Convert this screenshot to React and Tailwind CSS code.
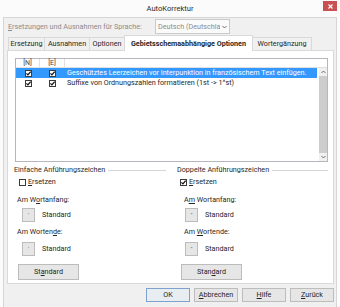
import React from 'react';

const Check = ({ checked }) => (
  <span className="inline-flex w-[7px] h-[7px] shrink-0 items-center justify-center border border-[#3a3a3a] bg-white">
    {checked && (
      <svg width="5" height="5" viewBox="0 0 5 5">
        <path d="M0.4 2.4 L1.9 3.9 L4.6 0.7" stroke="#111" strokeWidth="1.2" fill="none" />
      </svg>
    )}
  </span>
);

const Chevron = ({ up }) => (
  <svg width="5" height="4" viewBox="0 0 5 4">
    <path d={up ? 'M0.5 3 L2.5 1 L4.5 3' : 'M0.5 1 L2.5 3 L4.5 1'} stroke="#606060" strokeWidth="0.9" fill="none" />
  </svg>
);

const Tab = ({ label, width, active }) =>
  active ? (
    <div className={`relative z-10 -mb-px h-[16px] ${width} -ml-px flex items-center justify-center border border-b-0 border-[#d9d9d9] bg-white font-bold whitespace-nowrap`}>
      {label}
    </div>
  ) : (
    <div className={`h-[13px] ${width} -ml-px flex items-center justify-center border border-b-0 border-[#d9d9d9] bg-[#f0f0f0] first:ml-0 whitespace-nowrap`}>
      {label}
    </div>
  );

const SmallButton = ({ glyph }) => (
  <div className="w-[13px] h-[14px] border border-[#bcbcbc] bg-[#e6e6e6] flex items-center justify-center text-[6px] text-[#555]">
    {glyph}
  </div>
);

const Button = ({ children, w = 'w-[61px]', def }) => (
  <div
    className={`${w} h-[16px] flex items-center justify-center border ${
      def ? 'border-[#7da2ce] bg-[#e8edf2]' : 'border-[#bcbcbc] bg-[#e6e6e6]'
    }`}
  >
    {children}
  </div>
);

const QuoteColumn = ({ title, checked, glyph, o, width, line, parts }) => (
  <div className={`${width} flex flex-col`}>
    <div className={`h-[10px] flex items-center gap-[3px] ${line}`}>
      <span className="text-[#2a2a2a]">{title}</span>
      <div className="flex-1 h-px bg-[#d5d5d5]" />
    </div>
    <div className={`mt-[2px] h-[10px] flex items-center gap-[2px] ${o.check}`}>
      <Check checked={checked} />
      <span>
        <u>E</u>rsetzen
      </span>
    </div>
    <div className={`mt-[8px] h-[10px] flex items-center ${o.label}`}>{parts[0]}</div>
    <div className={`mt-[3px] flex items-center gap-[7px] ${o.btn}`}>
      <SmallButton glyph={glyph} />
      <span>Standard</span>
    </div>
    <div className={`mt-[5px] h-[10px] flex items-center ${o.label}`}>{parts[1]}</div>
    <div className={`mt-[5px] flex items-center gap-[7px] ${o.btn}`}>
      <SmallButton glyph={glyph} />
      <span>Standard</span>
    </div>
    <div className={`mt-[8px] flex ${o.big}`}>
      <Button>{parts[2]}</Button>
    </div>
  </div>
);

export default function App() {
  return (
    <div className="w-[340px] h-[307px] overflow-hidden bg-[#fbfbfb] flex flex-col font-[Roboto,'Liberation_Sans',sans-serif] text-[7.2px] leading-none text-[#262626]">
      {/* title bar */}
      <div className="relative h-[17px] shrink-0 flex items-center justify-center text-[7.6px] text-[#2b2b2b]">
        AutoKorrektur
        <div className="absolute right-[3px] top-[1px] w-[14px] h-[10px] bg-[#c75050] flex items-center justify-center">
          <svg width="5" height="5" viewBox="0 0 5 5">
            <path d="M0.5 0.5 L4.5 4.5 M4.5 0.5 L0.5 4.5" stroke="#fff" strokeWidth="1.1" />
          </svg>
        </div>
      </div>

      <div className="flex-1 mx-[3px] border-l border-r border-t border-[#d6d6d6] bg-[#f0f0f0] flex flex-col">
        {/* language */}
        <div className="h-[17px] shrink-0 flex items-center pl-[4px] text-[#8c8c8c]">
          <span className="w-[147px] whitespace-nowrap">
            <u>E</u>rsetzungen und Ausnahmen für Sprache:
          </span>
          <div className="w-[75px] h-[15px] border border-[#cacaca] bg-[#fafafa] flex items-center justify-between pl-[2px] pr-[2px] overflow-hidden">
            <span className="whitespace-nowrap overflow-hidden">Deutsch (Deutschla</span>
            <Chevron />
          </div>
        </div>

        {/* tabs */}
        <div className="h-[15px] shrink-0 flex items-end pl-[4px]">
          <Tab label="Ersetzung" width="w-[37px]" />
          <Tab label="Ausnahmen" width="w-[46px]" />
          <Tab label="Optionen" width="w-[36px]" />
          <Tab label="Gebietsschemaabhängige Optionen" width="w-[129px]" active />
          <Tab label="Wortergänzung" width="w-[60px]" />
        </div>

        {/* tab page */}
        <div className="ml-[3px] w-[327px] h-[234px] shrink-0 border border-[#d9d9d9] bg-white pt-[7px] pl-[6px] pr-[5px] flex flex-col">
          <div className="ml-px h-[104px] border border-[#b5b7bd] bg-white flex flex-col">
            <div className="h-[9px] flex text-[7px] text-[#444]">
              <div className="w-[24px] border-r border-b border-[#e0e0e0] flex items-center justify-center whitespace-nowrap">[N]</div>
              <div className="w-[25px] border-r border-b border-[#e0e0e0] flex items-center justify-center whitespace-nowrap">[E]</div>
              <div className="flex-1 border-b border-[#e0e0e0]" />
            </div>
            <div className="flex-1 flex">
              <div className="flex-1 flex flex-col">
                <div className="h-[10px] flex items-center bg-[#3399ff] text-white">
                  <div className="w-[24px] flex justify-center"><Check checked /></div>
                  <div className="w-[25px] flex justify-center"><Check checked /></div>
                  <span className="pl-[2px] whitespace-nowrap">Geschütztes Leerzeichen vor Interpunktion in französischem Text einfügen.</span>
                </div>
                <div className="h-[10px] flex items-center">
                  <div className="w-[24px] flex justify-center"><Check checked /></div>
                  <div className="w-[25px] flex justify-center"><Check checked /></div>
                  <span className="pl-[2px] whitespace-nowrap">Suffixe von Ordnungszahlen formatieren (1st -&gt; 1^st)</span>
                </div>
              </div>
              <div className="ml-[2px] w-[8px] flex flex-col bg-[#f0f0f0]">
                <div className="h-[8px] flex items-center justify-center"><Chevron up /></div>
                <div className="flex-1 bg-[#cdcdcd]" />
                <div className="h-[8px] flex items-center justify-center"><Chevron /></div>
              </div>
            </div>
          </div>

          <div className="mt-[3px] flex">
            <QuoteColumn
              title="Einfache Anführungszeichen"
              checked={false}
              glyph="'"
              width="w-[163px]"
              line="pr-[11px]"
              o={{ check: 'pl-[5px]', label: 'pl-[3px]', btn: 'pl-[8px]', big: 'pl-[4px]' }}
              parts={[
                <span>Am W<u>o</u>rtanfang:</span>,
                <span>Am Worten<u>d</u>e:</span>,
                <span>St<u>a</u>ndard</span>,
              ]}
            />
            <QuoteColumn
              title="Doppelte Anführungszeichen"
              checked
              glyph={'"'}
              width="flex-1"
              line=""
              o={{ check: 'pl-[3px]', label: 'pl-[7px]', btn: 'pl-[8px]', big: 'pl-[4px]' }}
              parts={[
                <span>A<u>m</u> Wortanfang:</span>,
                <span>Am <u>W</u>ortende:</span>,
                <span>Stan<u>d</u>ard</span>,
              ]}
            />
          </div>
        </div>

        {/* dialog buttons */}
        <div className="mt-[4px] flex justify-end gap-[4px] pr-[2px] [&>div]:h-[14px]">
          <Button w="w-[44px]" def>OK</Button>
          <Button w="w-[44px]"><span><u>A</u>bbrechen</span></Button>
          <Button w="w-[44px]"><span><u>H</u>ilfe</span></Button>
          <Button w="w-[44px]"><span><u>Z</u>urück</span></Button>
        </div>
      </div>
    </div>
  );
}
